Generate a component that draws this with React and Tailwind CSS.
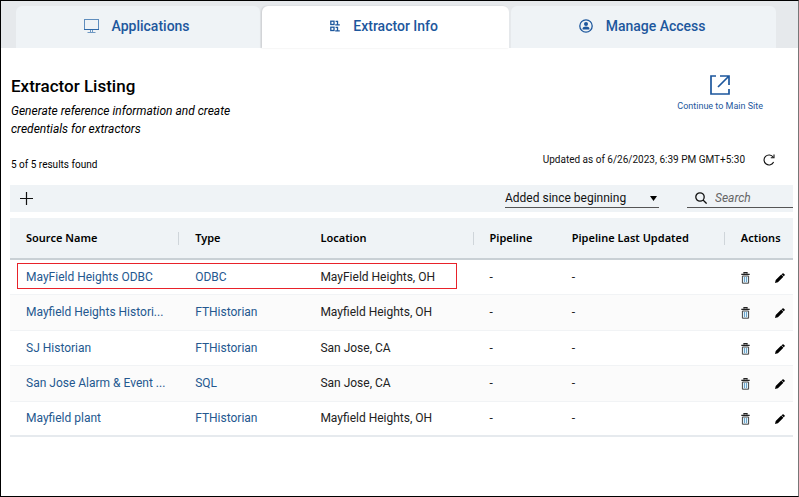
import React from "react";

const rows = [
  { name: "MayField Heights ODBC", type: "ODBC", location: "MayField Heights, OH", marked: true },
  { name: "Mayfield Heights Histori...", type: "FTHistorian", location: "Mayfield Heights, OH" },
  { name: "SJ Historian", type: "FTHistorian", location: "San Jose, CA" },
  { name: "San Jose Alarm & Event ...", type: "SQL", location: "San Jose, CA" },
  { name: "Mayfield plant", type: "FTHistorian", location: "Mayfield Heights, OH" },
];

function MonitorIcon() {
  return (
    <svg width="15" height="14" viewBox="0 0 15 14" fill="none" stroke="#5f8dbd" aria-hidden="true">
      <rect x="0.5" y="0.5" width="14" height="10" />
      <path d="M0 10.5h15" stroke="#2f68a8" />
      <path d="M6.5 11v2M8.5 11v2M3.5 13.5h8" strokeWidth="0.9" />
    </svg>
  );
}

function BinaryIcon() {
  return (
    <svg width="10" height="12" viewBox="0 0 10 12" fill="none" stroke="#1d579d" strokeWidth="1.3" aria-hidden="true">
      <rect x="0.8" y="1.2" width="3.2" height="3.300" />
      <rect x="0.8" y="7.2" width="3.2" height="3.300" />
      <path d="M5.600 1.300h1.900v3.200M5.200 4.800h4.600M5.600 7.300h1.900v3.200M5.200 10.800h4.600" />
    </svg>
  );
}

function PersonIcon() {
  return (
    <svg width="14" height="14" viewBox="0 0 14 14" fill="none" aria-hidden="true">
      <circle cx="7" cy="7" r="6.2" stroke="#1d579d" strokeWidth="1.3" />
      <circle cx="7" cy="5" r="2" fill="#1d579d" />
      <path d="M3.6 10.4V9.6c0-1.4 1.5-2.1 3.4-2.1s3.4.7 3.4 2.1v.8z" fill="#1d579d" />
    </svg>
  );
}

function OpenIcon() {
  return (
    <svg width="20" height="20" viewBox="0 0 20 20" fill="none" stroke="#1d579d" strokeWidth="1.7" aria-hidden="true">
      <path d="M6 1H1v18h18v-5" />
      <path d="M10 1h9v9M19 1L8 12" />
    </svg>
  );
}

function RefreshIcon() {
  return (
    <svg width="12" height="12" viewBox="0 0 12 12" fill="none" stroke="#111" strokeWidth="1.1" aria-hidden="true">
      <path d="M10.2 3.2A5 5 0 1 0 10.600 8" />
      <path d="M11 .6v3.2H7.8" />
    </svg>
  );
}

function SearchIcon() {
  return (
    <svg width="12" height="12" viewBox="0 0 12 12" fill="none" stroke="#111" strokeWidth="1.3" className="shrink-0" aria-hidden="true">
      <circle cx="5" cy="5" r="4.2" />
      <path d="M8 8l3.6 3.6" />
    </svg>
  );
}

function TrashIcon() {
  return (
    <svg width="9" height="12" viewBox="0 0 9 12" fill="none" aria-hidden="true">
      <path d="M3 1.400V.6h3v.8M.3 2.300h8.400" stroke="#222" strokeWidth="1.300" />
      <path d="M1.400 4h6.200v7.200H1.400z" fill="#e4f2fa" stroke="#444" />
      <path d="M3.500 5v5M5.500 5v5" stroke="#5b9bc4" strokeWidth="0.9" />
    </svg>
  );
}

function PencilIcon() {
  return (
    <svg width="10" height="10" viewBox="0 0 10 10" fill="#000" aria-hidden="true">
      <path d="M0 10l.7-3L6.200 1.600l2.200 2.200L2.900 9.300zM6.600 1.200l.9-.8q.6-.5 1.100 0l.9.900q.6.600 0 1.100l-.8.900z" />
    </svg>
  );
}

function Tab({ icon, label, className, active }) {
  return (
    <button
      type="button"
      role="tab"
      aria-selected={!!active}
      className={`flex items-center justify-center rounded-t-md pr-[3px] pb-0.5 text-sm font-medium text-[#1d579d] ${className}`}
    >
      {icon}
      {label}
    </button>
  );
}

function Heading({ children, divider }) {
  return (
    <th scope="col" className="p-0 text-left font-semibold">
      <div className={`flex h-[13px] items-center pl-4 ${divider ? "border-r border-[#cfd5da]" : ""}`}>{children}</div>
    </th>
  );
}

export default function App() {
  return (
    <div className="flex min-h-screen flex-col border border-r-[#777] border-black bg-white font-['Roboto',sans-serif] text-xs text-[#222]">
      <nav role="tablist" aria-label="Sections" className="flex h-[47px] gap-0.5 bg-[#e6e9ec] pt-[5px] pr-[22px] pl-[15px]">
        <Tab icon={<MonitorIcon />} label="Applications" className="flex-[244] gap-[13px] bg-[#eff3f6]" />
        <Tab active icon={<BinaryIcon />} label="Extractor Info" className="flex-[247] gap-[13px] bg-white shadow-[-1px_0_2px_rgba(0,0,0,0.12)]" />
        <Tab icon={<PersonIcon />} label="Manage Access" className="flex-[265] gap-[13px] bg-[#eff3f6]" />
      </nav>

      <main className="pr-[5px] pl-[9px]">
        <header className="flex justify-between pt-[27px]">
          <div className="pl-px text-black">
            <h1 className="text-[17px] leading-[22px] font-medium">Extractor Listing</h1>
            <p className="mt-[5px] w-60 leading-[18px] italic">Generate reference information and create credentials for extractors</p>
            <p className="mt-[19px] text-[10px] leading-4">5 of 5 results found</p>
          </div>
          <div className="flex flex-col items-end">
            <a href="#main" className="mr-[30px] flex flex-col items-center gap-[5px] text-[9px] leading-3 text-[#1d579d]">
              <OpenIcon />
              Continue to Main Site
            </a>
            <div className="mt-10 mr-[18px] flex items-center gap-[18px] text-[10px] leading-4 text-[#111]">
              Updated as of 6/26/2023, 6:39 PM GMT+5:30
              <button type="button" aria-label="Refresh">
                <RefreshIcon />
              </button>
            </div>
          </div>
        </header>

        <div className="mt-3 flex h-[27px] items-center bg-[#eff3f6]">
          <button type="button" aria-label="Add extractor" className="ml-2.5">
            <svg width="13" height="13" viewBox="0 0 13 13" stroke="#111" strokeWidth="1.2" aria-hidden="true">
              <path d="M6.500 0v13M0 6.500h13" />
            </svg>
          </button>
          <div className="relative mr-7 ml-auto w-[154px] border-b border-[#555]">
            <select aria-label="Added since" className="block h-[17px] w-full appearance-none bg-transparent text-xs leading-4 text-[#111]">
              <option>Added since beginning</option>
            </select>
            <svg className="pointer-events-none absolute top-1.5 right-0.5" width="7" height="5" viewBox="0 0 7 5" aria-hidden="true">
              <path d="M0 0h7L3.500 5z" />
            </svg>
          </div>
          <label className="flex h-[18px] w-[106px] items-center gap-2 border-b border-[#555] pl-2">
            <SearchIcon />
            <input
              type="search"
              aria-label="Search"
              placeholder="Search"
              className="w-full min-w-0 bg-transparent text-xs leading-4 italic outline-none placeholder:text-[#666]"
            />
          </label>
        </div>

        <table className="mt-[6px] w-full table-fixed border-collapse">
          <colgroup>
            <col className="w-[21.6%]" />
            <col className="w-[16%]" />
            <col className="w-[21.6%]" />
            <col className="w-[10.500%]" />
            <col className="w-[21.6%]" />
            <col />
          </colgroup>
          <thead>
            <tr className="h-[41px] border-b-2 border-[#c9d0d5] bg-[#eff3f6] font-['Noto_Sans',sans-serif] text-[11px] text-black">
              <Heading divider>Source Name</Heading>
              <Heading>Type</Heading>
              <Heading divider>Location</Heading>
              <Heading>Pipeline</Heading>
              <Heading divider>Pipeline Last Updated</Heading>
              <Heading>Actions</Heading>
            </tr>
          </thead>
          <tbody>
            {rows.map((row) => (
              <tr
                key={row.name}
                className="relative h-[35px] border-b border-[#f1f3f5] last:border-b-2 last:border-[#e6eaee] odd:bg-white even:h-9 even:bg-[#fbfbfb]"
              >
                <td className="truncate pl-4">
                  {row.marked && (
                    <span className="pointer-events-none absolute inset-y-1 left-[7px] w-[56.2%] border border-[#e8222a]" />
                  )}
                  <a href="#source" className="text-[#24588f]">{row.name}</a>
                </td>
                <td className="pl-4">
                  <a href="#type" className="text-[#24588f]">{row.type}</a>
                </td>
                <td className="pl-4 whitespace-nowrap">{row.location}</td>
                <td className="pl-4">-</td>
                <td className="pl-4">-</td>
                <td className="pr-2 pl-4">
                  <div className="flex items-center justify-between pt-0.5">
                    <button type="button" aria-label={`Delete ${row.name}`}>
                      <TrashIcon />
                    </button>
                    <button type="button" aria-label={`Edit ${row.name}`}>
                      <PencilIcon />
                    </button>
                  </div>
                </td>
              </tr>
            ))}
          </tbody>
        </table>
      </main>
    </div>
  );
}
